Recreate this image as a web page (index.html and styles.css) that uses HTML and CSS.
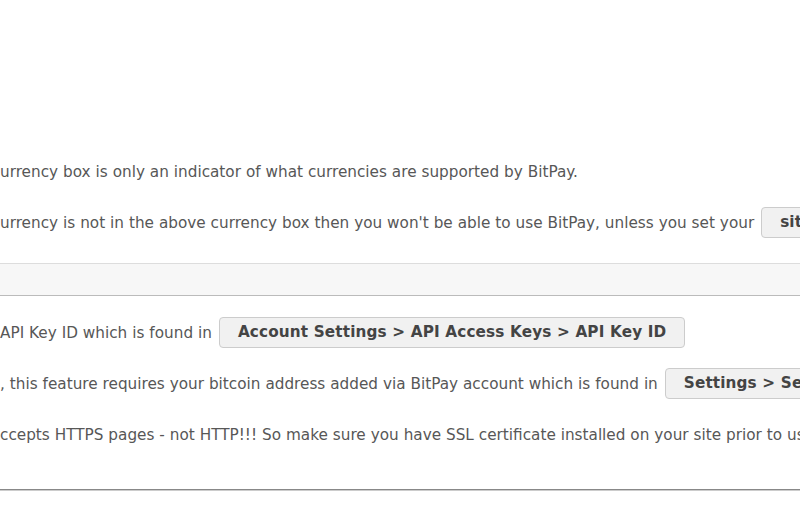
FILE: index.html
```html
<!DOCTYPE html>
<html lang="en">
<head>
  <meta charset="UTF-8">
  <meta name="viewport" content="width=device-width, initial-scale=1.0">
  <title>BitPay settings</title>
  <link rel="stylesheet" href="styles.css">
</head>
<body>
  <div class="page">
    <div class="top-space"></div>

    <div class="notes">
      <p class="note">urrency box is only an indicator of what currencies are supported by BitPay.</p>
      <p class="note">urrency is not in the above currency box then you won't be able to use BitPay, unless you set your <span class="path">site currency</span></p>
    </div>

    <div class="band"></div>

    <div class="notes">
      <p class="note">API Key ID which is found in <span class="path">Account Settings &gt; API Access Keys &gt; API Key ID</span></p>
      <p class="note">, this feature requires your bitcoin address added via BitPay account which is found in <span class="path">Settings &gt; Settlement</span></p>
      <p class="note">ccepts HTTPS pages - not HTTP!!! So make sure you have SSL certificate installed on your site prior to using it.</p>
    </div>

    <hr class="rule">
  </div>
</body>
</html>
```

FILE: styles.css
```css
html, body {
  margin: 0;
  padding: 0;
  background: #fff;
}
body {
  font-family: "DejaVu Sans", Verdana, sans-serif;
  font-size: 15.25px;
  color: #575757;
  overflow: hidden;
}
.page {
  width: 800px;
  overflow: hidden;
}
.top-space {
  height: 146px;
}
.note {
  margin: 0;
  height: 51px;
  display: flex;
  align-items: center;
  white-space: nowrap;
  word-spacing: 0.1px;
}
.path {
  display: inline-block;
  margin-left: 7px;
  padding: 0 18px;
  height: 29px;
  line-height: 29px;
  background: #f1f1f1;
  border: 1px solid #ccc;
  border-radius: 4px;
  font-weight: bold;
  letter-spacing: 0.13px;
  color: #444;
}
.band {
  margin-top: 15px;
  margin-bottom: 11px;
  height: 31px;
  background: #f7f7f7;
  border-top: 1px solid #ddd;
  border-bottom: 1px solid #bbb;
}
.rule {
  margin: 29px 0 0;
  height: 0;
  border: 0;
  border-top: 1px solid #888;
  border-bottom: 1px solid #ccc;
}
```
